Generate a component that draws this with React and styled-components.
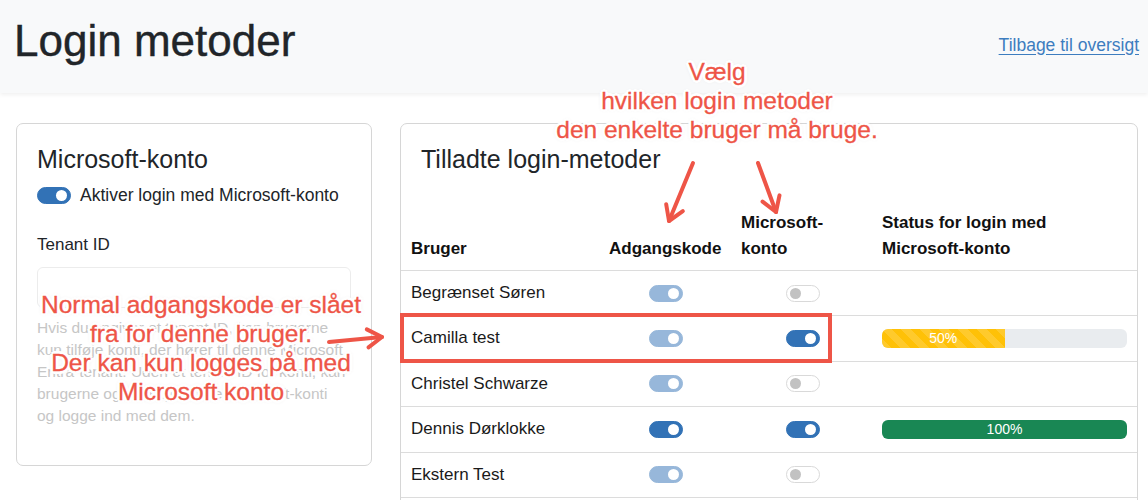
import styled, { createGlobalStyle, css } from 'styled-components'

const GlobalStyle = createGlobalStyle`
  html, body {
    margin: 0;
    padding: 0;
    background: #fff;
  }
  body {
    font-family: 'Liberation Sans', Arial, sans-serif;
    color: #212529;
  }
`

const RED = '#ee5547'
const BLUE = '#3272b6'

const Page = styled.div`
  position: relative;
  width: 1148px;
  min-height: 500px;
  overflow: hidden;
`

const Header = styled.header`
  display: flex;
  align-items: center;
  justify-content: space-between;
  height: 93px;
  box-sizing: border-box;
  padding: 0 9px 13px 14px;
  background: #f8f9fa;
  box-shadow: 0 2px 4px rgba(0, 0, 0, 0.06);
`

const Title = styled.h1`
  margin: 0;
  font-size: 44px;
  line-height: 53px;
  font-weight: 400;
  color: #212529;
  -webkit-text-stroke: 0.4px #212529;
`

const BackLink = styled.a`
  margin-top: 9px;
  font-size: 17.5px;
  line-height: 26px;
  color: #3d7dbf;
  text-decoration: underline;
  text-underline-offset: 3px;
  cursor: pointer;
`

const Main = styled.main`
  display: grid;
  grid-template-columns: 356px 738px;
  gap: 28px;
  align-items: start;
  padding: 30px 0 0 16px;
`

const Card = styled.section`
  border: 1px solid #d6d6d6;
  border-radius: 7px;
  background: #fff;
  overflow: hidden;
`

const CardBody = styled.div`
  padding: 20px;
`

const CardTitle = styled.h2`
  margin: 0 0 ${(p) => p.$gap || 8}px;
  font-size: 25px;
  line-height: 30px;
  font-weight: 400;
  color: #212529;
  ${(p) => p.$inset && css`padding: 20px 20px 0;`}
`

const SwitchRow = styled.label`
  display: flex;
  align-items: center;
  gap: 9px;
  font-size: 17.5px;
  line-height: 26px;
`

const Switch = styled.span`
  position: relative;
  display: inline-block;
  width: 34px;
  height: 17px;
  box-sizing: border-box;
  border-radius: 9px;
  vertical-align: middle;
  border: 1px solid ${(p) => (p.$on ? BLUE : '#d9d9d9')};
  background: ${(p) => (p.$on ? BLUE : '#fff')};
  opacity: ${(p) => (p.$disabled ? 0.5 : 1)};

  &::after {
    content: '';
    position: absolute;
    top: 2px;
    ${(p) => (p.$on ? 'right: 3px;' : 'left: 3px;')}
    width: 11px;
    height: 11px;
    border-radius: 50%;
    background: ${(p) => (p.$on ? '#fff' : '#c2c2c2')};
  }
`

const FieldLabel = styled.div`
  margin-top: 24px;
  font-size: 17px;
  line-height: 26px;
`

const Input = styled.div`
  margin-top: 9px;
  height: 41px;
  box-sizing: border-box;
  border: 1px solid #ececec;
  border-radius: 6px;
  width: 314px;
`

const Help = styled.p`
  margin: 9px 0 18px;
  font-size: 15.5px;
  line-height: 22px;
  color: #c6c6c6;
  white-space: nowrap;
`

const Table = styled.table`
  width: 100%;
  margin-bottom: 24px;
  border-collapse: collapse;
  table-layout: fixed;
`

const Th = styled.th`
  text-align: left;
  vertical-align: bottom;
  padding: 8px 9px 8px ${(p) => (p.$first ? 10 : 9)}px;
  font-size: 17px;
  line-height: 26px;
  font-weight: 700;
  color: #111;
  border-bottom: 1px solid #dcdcdc;
`

const Td = styled.td`
  padding: 11px 10px 11px ${(p) => (p.$first ? 10 : 9)}px;
  font-size: 17px;
  line-height: 22.4px;
  color: #1a1a1a;
  vertical-align: middle;
  text-align: ${(p) => (p.$center ? 'center' : 'left')};
  border-bottom: 1px solid #dcdcdc;
`

const SwitchCell = styled(Td)`
  padding-left: 0;
  padding-right: 0;
  font-size: 0;
`

const Progress = styled.div`
  display: flex;
  height: 19px;
  border-radius: 6px;
  overflow: hidden;
  background: #e9ecef;
`

const Bar = styled.div`
  display: flex;
  align-items: center;
  justify-content: center;
  font-size: 14px;
  color: #fff;
  background-color: ${(p) => p.$color};
  ${(p) =>
    p.$striped &&
    css`
      background-image: linear-gradient(
        45deg,
        rgba(255, 255, 255, 0.15) 25%,
        transparent 25%,
        transparent 50%,
        rgba(255, 255, 255, 0.15) 50%,
        rgba(255, 255, 255, 0.15) 75%,
        transparent 75%,
        transparent
      );
      background-size: 19px 19px;
    `}
`

const Note = styled.div`
  position: absolute;
  top: ${(p) => p.$top}px;
  left: ${(p) => p.$center}px;
  transform: translateX(-50%);
  text-align: center;
  white-space: nowrap;
  font-size: 24.5px;
  line-height: 29px;
  color: ${RED};
  -webkit-text-stroke: 0.3px ${RED};
  text-shadow: 3px 0 0 #fff, -3px 0 0 #fff, 0 3px 0 #fff, 0 -3px 0 #fff,
    2px 2px 0 #fff, -2px -2px 0 #fff, 2px -2px 0 #fff, -2px 2px 0 #fff,
    0 0 5px rgba(0, 0, 0, 0.2);
  pointer-events: none;
`

const Highlight = styled.div`
  position: absolute;
  left: 400px;
  top: 313px;
  width: 432px;
  height: 50px;
  box-sizing: border-box;
  border: 4px solid ${RED};
  pointer-events: none;
`

const ArrowLayer = styled.svg`
  position: absolute;
  left: 0;
  top: 0;
  pointer-events: none;
`

const Arrow = ({ x1, y1, x2, y2 }) => {
  const a = Math.atan2(y1 - y2, x1 - x2)
  const len = 17
  const spread = (32 * Math.PI) / 180
  const p1 = [x2 + len * Math.cos(a + spread), y2 + len * Math.sin(a + spread)]
  const p2 = [x2 + len * Math.cos(a - spread), y2 + len * Math.sin(a - spread)]
  return (
    <g stroke={RED} strokeWidth='4' strokeLinecap='round' strokeLinejoin='round' fill='none'>
      <line x1={x1} y1={y1} x2={x2} y2={y2} />
      <polyline points={`${p1[0]},${p1[1]} ${x2},${y2} ${p2[0]},${p2[1]}`} />
    </g>
  )
}

const users = [
  { name: 'Begrænset Søren', password: true, pwLocked: true, ms: false },
  { name: 'Camilla test', password: true, pwLocked: true, ms: true, progress: 50 },
  { name: 'Christel Schwarze', password: true, pwLocked: true, ms: false },
  { name: 'Dennis Dørklokke', password: true, ms: true, progress: 100 },
  { name: 'Ekstern Test', password: true, pwLocked: true, ms: false },
]

export default function App() {
  return (
    <Page>
      <GlobalStyle />
      <Header>
        <Title>Login metoder</Title>
        <BackLink>Tilbage til oversigt</BackLink>
      </Header>

      <Main>
        <Card>
          <CardBody>
            <CardTitle>Microsoft-konto</CardTitle>
            <SwitchRow>
              <Switch $on />
              Aktiver login med Microsoft-konto
            </SwitchRow>
            <FieldLabel>Tenant ID</FieldLabel>
            <Input />
            <Help>
              Hvis du angiver et tenant ID, kan brugerne
              <br />
              kun tilføje konti, der hører til denne Microsoft
              <br />
              Entra-tenant. Uden et tenant ID for konti, kan
              <br />
              brugerne også tilføje andre Microsoft-konti
              <br />
              og logge ind med dem.
            </Help>
          </CardBody>
        </Card>

        <Card>
          <CardTitle $inset $gap={28}>
            Tilladte login-metoder
          </CardTitle>
          <Table>
            <colgroup>
              <col style={{ width: 199 }} />
              <col style={{ width: 132 }} />
              <col style={{ width: 141 }} />
              <col />
            </colgroup>
            <thead>
              <tr>
                <Th $first>Bruger</Th>
                <Th>Adgangskode</Th>
                <Th>
                  Microsoft-
                  <br />
                  konto
                </Th>
                <Th>
                  Status for login med
                  <br />
                  Microsoft-konto
                </Th>
              </tr>
            </thead>
            <tbody>
              {users.map((u) => (
                <tr key={u.name}>
                  <Td $first>{u.name}</Td>
                  <SwitchCell $center>
                    <Switch $on={u.password} $disabled={u.pwLocked} />
                  </SwitchCell>
                  <SwitchCell $center>
                    <Switch $on={u.ms} />
                  </SwitchCell>
                  <Td>
                    {u.progress && (
                      <Progress>
                        <Bar
                          style={{ width: `${u.progress}%` }}
                          $color={u.progress < 100 ? '#ffc107' : '#198754'}
                          $striped={u.progress < 100}
                        >
                          {u.progress}%
                        </Bar>
                      </Progress>
                    )}
                  </Td>
                </tr>
              ))}
            </tbody>
          </Table>
        </Card>
      </Main>

      <Highlight />
      <ArrowLayer width='1148' height='500' viewBox='0 0 1148 500'>
        <Arrow x1={693} y1={163} x2={669} y2={221} />
        <Arrow x1={758} y1={163} x2={776} y2={212} />
        <Arrow x1={329} y1={342} x2={382} y2={337} />
      </ArrowLayer>

      <Note $top={57} $center={717}>
        Vælg
        <br />
        hvilken login metoder
        <br />
        den enkelte bruger må bruge.
      </Note>
      <Note $top={290} $center={201}>
        Normal adgangskode er slået
        <br />
        fra for denne bruger.
        <br />
        Der kan kun logges på med
        <br />
        Microsoft konto
      </Note>
    </Page>
  )
}
